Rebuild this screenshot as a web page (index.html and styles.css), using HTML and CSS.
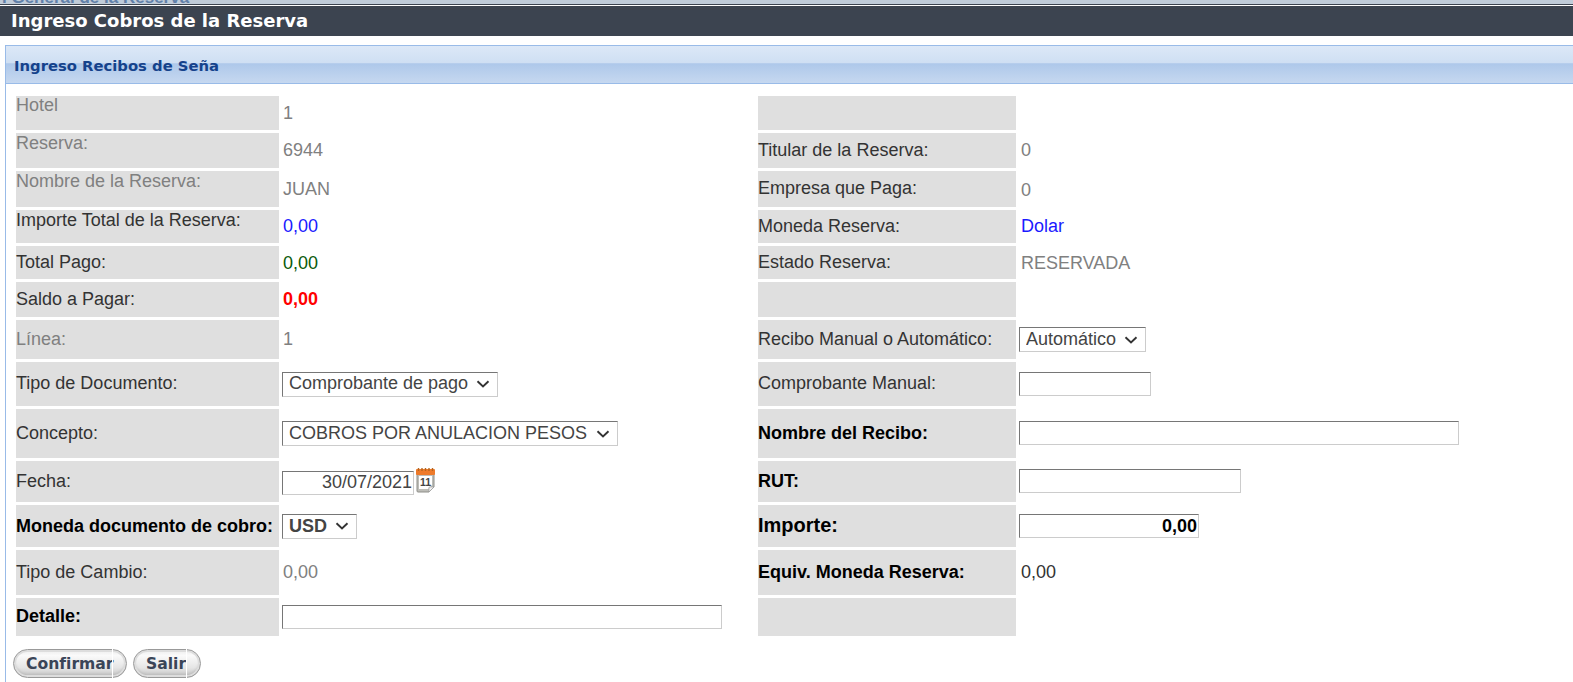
FILE: index.html
```html
<!DOCTYPE html>
<html lang="es">

<head>
    <meta charset="UTF-8">
    <meta name="viewport" content="width=device-width, initial-scale=1.0">
    <title>Ingreso Cobros de la Reserva</title>
    <link rel="stylesheet" href="styles.css">
</head>

<body>

    <div class="top-strip"><span>l General de la Reserva</span></div>
    <h1 class="page-title">Ingreso Cobros de la Reserva</h1>

    <div class="panel">
        <div class="panel-header">Ingreso Recibos de Seña</div>

        <div class="form-grid">
            <div class="lbl lbl-top lbl-hotel muted">Hotel</div>
            <div class="val muted">1</div>
            <div class="lbl"></div>
            <div class="val"></div>

            <div class="lbl lbl-top muted">Reserva:</div>
            <div class="val muted">6944</div>
            <div class="lbl">Titular de la Reserva:</div>
            <div class="val muted">0</div>

            <div class="lbl lbl-top muted">Nombre de la Reserva:</div>
            <div class="val muted">JUAN</div>
            <div class="lbl up">Empresa que Paga:</div>
            <div class="val muted down">0</div>

            <div class="lbl lbl-top">Importe Total de la Reserva:</div>
            <div class="val blue">0,00</div>
            <div class="lbl">Moneda Reserva:</div>
            <div class="val blue">Dolar</div>

            <div class="lbl">Total Pago:</div>
            <div class="val green down">0,00</div>
            <div class="lbl">Estado Reserva:</div>
            <div class="val muted down">RESERVADA</div>

            <div class="lbl">Saldo a Pagar:</div>
            <div class="val red">0,00</div>
            <div class="lbl"></div>
            <div class="val"></div>

            <div class="lbl muted">Línea:</div>
            <div class="val muted">1</div>
            <div class="lbl">Recibo Manual o Automático:</div>
            <div class="val">
                <select class="field sel-auto">
                    <option>Automático</option>
                </select>
            </div>

            <div class="lbl up">Tipo de Documento:</div>
            <div class="val">
                <select class="field sel-tipo">
                    <option>Comprobante de pago</option>
                </select>
            </div>
            <div class="lbl up">Comprobante Manual:</div>
            <div class="val"><input type="text" class="field in-comp"></div>

            <div class="lbl">Concepto:</div>
            <div class="val">
                <select class="field sel-concepto">
                    <option>COBROS POR ANULACION PESOS</option>
                </select>
            </div>
            <div class="lbl bold">Nombre del Recibo:</div>
            <div class="val"><input type="text" class="field in-nombre"></div>

            <div class="lbl">Fecha:</div>
            <div class="val val-fecha">
                <input type="text" class="field in-fecha" value="30/07/2021">
                <svg class="cal-icon" width="21" height="26" viewBox="0 0 21 26">
                    <path d="M2 5h17v15l-5 5H3a1 1 0 0 1-1-1z" fill="#bdbdb8" stroke="#8f8f8a" />
                    <path d="M4 9h13v9l-4 4H4z" fill="#fff" />
                    <path d="M14 25v-5h5z" fill="#f0f0f0" stroke="#999" stroke-width="0.6" />
                    <rect x="1" y="2" width="19" height="6" rx="1" fill="#ee7a2a" />
                    <path d="M3.5 1v3M7 1v3M10.5 1v3M14 1v3M17.5 1v3" stroke="#b5651f" stroke-width="1.4" />
                    <text x="10.5" y="18.5" class="cal-day">11</text>
                </svg>
            </div>
            <div class="lbl bold">RUT:</div>
            <div class="val"><input type="text" class="field in-rut"></div>

            <div class="lbl bold">Moneda documento de cobro:</div>
            <div class="val">
                <select class="field sel-moneda">
                    <option>USD</option>
                </select>
            </div>
            <div class="lbl bold lbl-big up">Importe:</div>
            <div class="val"><input type="text" class="field in-importe" value="0,00"></div>

            <div class="lbl">Tipo de Cambio:</div>
            <div class="val muted">0,00</div>
            <div class="lbl bold">Equiv. Moneda Reserva:</div>
            <div class="val">0,00</div>

            <div class="lbl bold up">Detalle:</div>
            <div class="val"><input type="text" class="field in-detalle"></div>
            <div class="lbl"></div>
            <div class="val"></div>
        </div>

        <div class="actions">
            <button class="btn btn-confirmar">Confirmar</button>
            <button class="btn btn-salir">Salir</button>
        </div>
    </div>

</body>

</html>
```

FILE: styles.css
```css
html,
body {
    height: 100%;
}

body {
    margin: 0;
    font-family: "Liberation Sans", Arial, sans-serif;
    font-size: 18px;
    color: #333;
    background-color: #fff;
    overflow: hidden;
}

.top-strip {
    height: 4px;
    overflow: hidden;
    background-color: #c0ccd9;
    border-bottom: 1px solid #3c4450;
    font-size: 17px;
    font-weight: bold;
    color: #6180a8;
    line-height: 16px;
}

.top-strip span {
    display: block;
    margin-top: -10px;
    padding-left: 2px;
}

.page-title {
    margin: 1px 0 0;
    height: 30px;
    line-height: 30px;
    padding-left: 11px;
    background-color: #3c4450;
    color: #fff;
    font-family: "DejaVu Sans", Verdana, sans-serif;
    font-size: 18px;
    font-weight: bold;
}

.panel {
    margin: 9px 0 0 5px;
    height: 637px;
    border-left: 1px solid #99bbe8;
}

.panel-header {
    height: 37px;
    line-height: 39px;
    padding-left: 8px;
    border-top: 1px solid #99bbe8;
    border-bottom: 1px solid #99bbe8;
    background: linear-gradient(#dce8f7 0, #cfdff3 45%, #aec8ea 48%, #c6d8f0 100%);
    color: #15428b;
    font-family: "DejaVu Sans", Verdana, sans-serif;
    font-size: 14.8px;
    font-weight: bold;
}

.form-grid {
    display: grid;
    grid-template-columns: 263px 473px 258px 1fr;
    grid-template-rows: 34px 35px 36px 33px 33px 35px 39px 44px 49px 41px 42px 45px 38px;
    gap: 3px;
    margin: 12px 0 0 10px;
}

.lbl {
    display: flex;
    align-items: center;
    background-color: #dfdfdf;
}

.lbl-top {
    align-items: flex-start;
}

.lbl-hotel {
    line-height: 19px;
}

.lbl-big {
    font-size: 20px;
}

.bold {
    font-weight: bold;
    color: #000;
}

.up {
    padding-bottom: 2px;
    box-sizing: border-box;
}

.down {
    padding-top: 2px;
    box-sizing: border-box;
}

.val {
    display: flex;
    align-items: center;
    padding-left: 1px;
}

.val:nth-child(4n) {
    padding-left: 2px;
}

.muted {
    color: #808080;
}

.blue {
    color: #1a1aff;
}

.green {
    color: #0a5a0a;
}

.red {
    color: #f00;
    font-weight: bold;
}

.field {
    box-sizing: border-box;
    margin: 0 0 0 -1px;
    border: 1px solid;
    border-color: #767676 #ccc #ccc #767676;
    background-color: #fff;
    color: #444;
    font-family: "Liberation Sans", Arial, sans-serif;
    font-size: 18px;
}

.val:nth-child(4n) .field {
    margin-left: -2px;
}

input.field {
    height: 24px;
    padding: 0 1px;
}

select.field {
    height: 25px;
    padding: 0 0 2px 6px;
    appearance: none;
    background-image: url("data:image/svg+xml,%3Csvg xmlns='http://www.w3.org/2000/svg' width='14' height='8'%3E%3Cpath d='M1.5 1.2l5.500 5.300 5.500-5.300' fill='none' stroke='%23333' stroke-width='1.900'/%3E%3C/svg%3E");
    background-repeat: no-repeat;
    background-position: right 7px center;
}

.sel-auto {
    width: 127px;
}

.sel-tipo {
    width: 216px;
}

.sel-concepto {
    width: 336px;
}

select.sel-moneda {
    width: 75px;
    padding-bottom: 0;
    font-weight: bold;
}

.in-comp {
    width: 132px;
}

.in-nombre {
    width: 440px;
    margin-bottom: 2px;
}

.in-rut {
    width: 222px;
    margin-bottom: 2px;
}

input.in-importe {
    width: 180px;
    text-align: right;
    font-weight: bold;
    color: #000;
}

input.in-fecha {
    width: 132px;
    padding-bottom: 2px;
    text-align: right;
    margin-top: 3px;
}

.in-detalle {
    width: 440px;
}

.val-fecha {
    gap: 1px;
}

.cal-icon {
    margin-top: -3px;
}

.cal-day {
    font-family: "Liberation Sans", Arial, sans-serif;
    font-size: 10.5px;
    font-weight: bold;
    fill: #444;
    text-anchor: middle;
}

.actions {
    display: flex;
    gap: 6px;
    margin: 13px 0 0 7px;
}

.btn {
    position: relative;
    height: 29px;
    padding: 0 0 0 12px;
    border: 1px solid #999;
    border-radius: 15px;
    background: linear-gradient(#ececec 0, #fafafa 20%, #e6e6e6 65%, #c4c4c4 100%);
    box-shadow: inset 0 0 0 2px #ddd, inset 0 -3px 3px #bbb;
    color: #3a4558;
    font-family: "DejaVu Sans", Verdana, sans-serif;
    font-size: 15.6px;
    font-weight: bold;
    text-align: left;
}

/* the old button is two images, a seam shows between them */
.btn::after {
    content: "";
    position: absolute;
    top: -1px;
    bottom: -1px;
    right: 13px;
    width: 1px;
    background-color: #fff;
}

.btn-confirmar {
    width: 114px;
}

.btn-salir {
    width: 68px;
}
```
